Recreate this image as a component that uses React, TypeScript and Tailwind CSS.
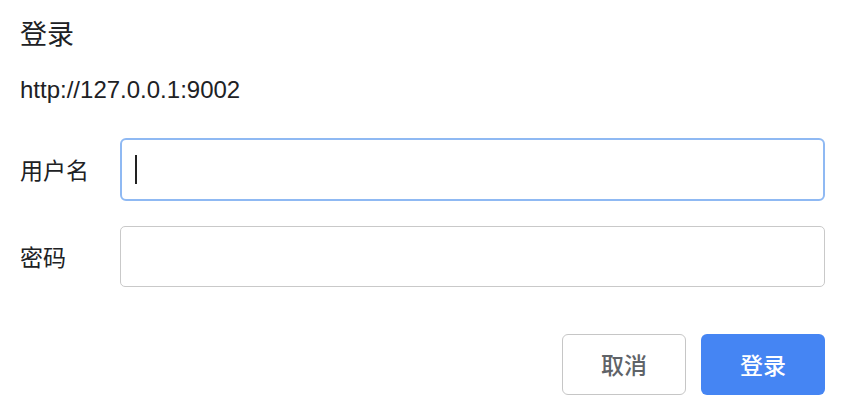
import React from 'react';

const cjk = { fontFamily: '"Noto Sans CJK SC", "Liberation Sans", sans-serif' };
const latin = { fontFamily: '"Liberation Sans", "Noto Sans CJK SC", sans-serif' };

const Field = ({ label, focused }: { label: string; focused?: boolean }) => (
  <div className="flex items-center">
    <div className="w-[100px] text-[23px] text-[#202124]">{label}</div>
    <div
      className={
        focused
          ? 'flex h-[63px] flex-1 items-center rounded-[6px] border-2 border-[#8fb9f3] px-[13px]'
          : 'flex h-[61px] flex-1 items-center rounded-[5px] border border-[#c9c9c9] px-[14px]'
      }
    >
      {focused && <span className="h-[29px] w-[2px] bg-[#222]" />}
    </div>
  </div>
);

const App = () => {
  return (
    <div className="h-[416px] w-[844px] bg-white pt-[17px] pr-[19px] pl-[20px]" style={cjk}>
      <div className="flex h-[33px] items-center text-[27px] text-[#202124]">登录</div>
      <div className="mt-[26px] flex h-[28px] items-center text-[24px] text-[#202124]" style={latin}>
        http://127.0.0.1:9002
      </div>

      <div className="mt-[34px] flex flex-col gap-[25px]">
        <Field label="用户名" focused />
        <Field label="密码" />
      </div>

      <div className="mt-[47px] flex justify-end gap-[15px]">
        <button className="h-[61px] w-[124px] rounded-[6px] border border-[#c6c6c6] bg-white text-[23px] font-medium text-[#5f6368]">
          取消
        </button>
        <button className="h-[61px] w-[124px] rounded-[6px] bg-[#4585f3] text-[23px] font-medium text-white">
          登录
        </button>
      </div>
    </div>
  );
};

export default App;
